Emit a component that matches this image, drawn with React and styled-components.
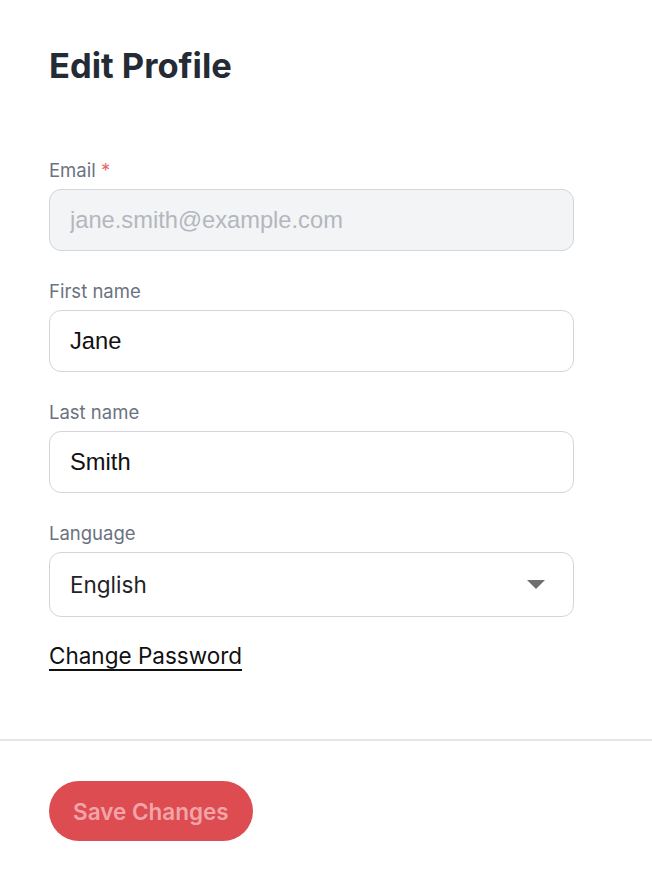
import React from 'react'
import styled, { createGlobalStyle } from 'styled-components'

const GlobalStyle = createGlobalStyle`
  body {
    margin: 0;
    background: #fff;
    font-family: Inter, "Liberation Sans", sans-serif;
  }
`

const Page = styled.div`
  width: 652px;
  min-height: 876px;
  display: flex;
  flex-direction: column;
`

const Main = styled.div`
  padding: 44px 78px 0 49px;
  display: flex;
  flex-direction: column;
`

const Title = styled.h1`
  margin: 0 0 71px 0;
  font-size: 34.5px;
  font-weight: 700;
  line-height: 44px;
  color: #252b35;
`

const Field = styled.div`
  display: flex;
  flex-direction: column;
  margin-bottom: 29px;
`

const Label = styled.label`
  font-size: 18.5px;
  line-height: 22px;
  color: #6b7280;
  margin-bottom: 8px;

  span {
    color: #e5676c;
  }
`

const Input = styled.input`
  box-sizing: border-box;
  height: 62px;
  width: 100%;
  border: 1px solid #d4d5da;
  border-radius: 12px;
  padding: 0 20px;
  font-family: "Liberation Sans", Arial, sans-serif;
  font-size: 23.7px;
  color: #111;
  background: ${p => (p.disabled ? '#f3f4f6' : '#fff')};
  outline: none;

  &::placeholder,
  &:disabled {
    color: #b4b7bd;
  }
`

const SelectBox = styled.div`
  height: 65px;
  box-sizing: border-box;
  border: 1px solid #d4d5da;
  border-radius: 12px;
  display: flex;
  align-items: center;
  justify-content: space-between;
  padding: 0 20px;
  font-size: 22.5px;
  color: #1f2328;
`

const Caret = styled.span`
  width: 0;
  height: 0;
  border-left: 9px solid transparent;
  border-right: 9px solid transparent;
  border-top: 9px solid #6e6e6e;
  margin-right: 8px;
`

const Link = styled.a`
  align-self: flex-start;
  font-size: 22.5px;
  line-height: 20px;
  color: #111;
  text-decoration: underline;
  text-underline-offset: 5px;
  text-decoration-thickness: 2px;
  cursor: pointer;
`

const Footer = styled.div`
  margin-top: 73px;
  border-top: 2px solid #e5e5ea;
  padding: 40px 49px;
`

const SaveButton = styled.button`
  height: 60px;
  padding: 0 24px;
  border: none;
  border-radius: 30px;
  background: #dc4c51;
  color: #f2a4a8;
  font-family: Inter, "Liberation Sans", sans-serif;
  font-size: 22.5px;
  font-weight: 600;
  cursor: not-allowed;
`

export default function App() {
  return (
    <Page>
      <GlobalStyle />
      <Main>
        <Title>Edit Profile</Title>
        <Field>
          <Label>Email <span>*</span></Label>
          <Input disabled placeholder="jane.smith@example.com" />
        </Field>
        <Field>
          <Label>First name</Label>
          <Input defaultValue="Jane" />
        </Field>
        <Field>
          <Label>Last name</Label>
          <Input defaultValue="Smith" />
        </Field>
        <Field>
          <Label>Language</Label>
          <SelectBox>
            English
            <Caret />
          </SelectBox>
        </Field>
        <Link>Change Password</Link>
      </Main>
      <Footer>
        <SaveButton disabled>Save Changes</SaveButton>
      </Footer>
    </Page>
  )
}
